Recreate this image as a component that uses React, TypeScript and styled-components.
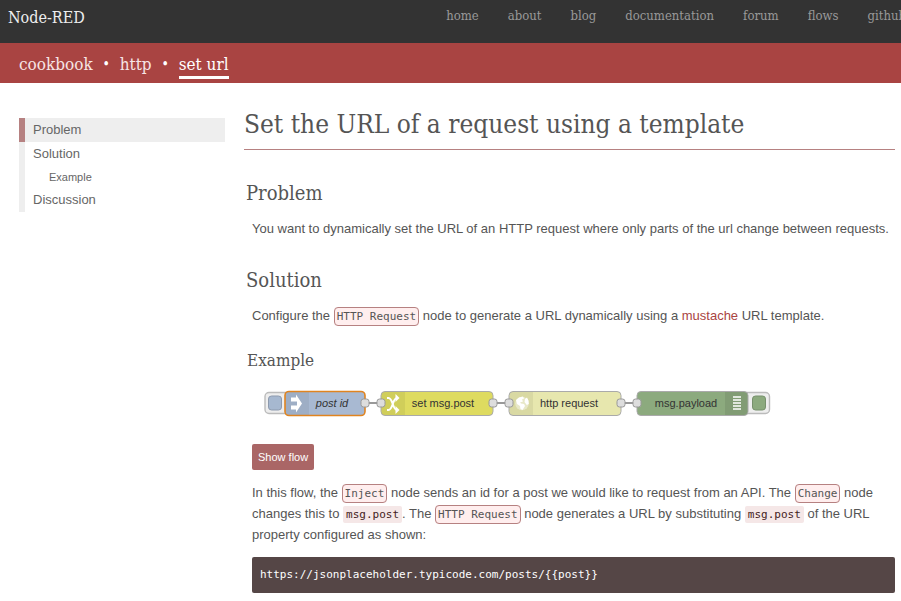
import React from "react";
import styled, { createGlobalStyle, css } from "styled-components";

const slab = `"Roboto Slab", "DejaVu Serif Condensed", "DejaVu Serif", serif`;
const sans = `"Liberation Sans", Arial, sans-serif`;
const mono = `"DejaVu Sans Mono", "Liberation Mono", monospace`;

const GlobalStyle = createGlobalStyle`
  * { box-sizing: border-box; }
  body {
    margin: 0;
    overflow-x: hidden;
    background: #fff;
    color: #555;
    font: 13px/21px ${sans};
  }
  a { color: inherit; text-decoration: none; }
`;

const Header = styled.header`
  display: flex;
  justify-content: space-between;
  height: 43px;
  padding-left: 8px;
  overflow: hidden;
  background: #333;
  font-family: ${slab};
  white-space: nowrap;
`;

const Brand = styled.a`
  color: #eee;
  font-size: 16px;
  line-height: 35px;
`;

const SiteNav = styled.nav`
  display: flex;
  gap: 29px;
  margin-right: -5px;
  color: #999;
  font-size: 13px;
  line-height: 32px;
`;

const Crumbs = styled.nav`
  display: flex;
  align-items: center;
  height: 40px;
  padding: 2px 19px 0;
  background: #a94442;
  color: #fff;
  font: 17px/24px ${slab};
`;

const Crumb = styled.a<{ $current?: boolean }>`
  height: 29px;
  line-height: 28px;
  color: ${(p) => (p.$current ? "#fff" : "#f7e5e5")};
  border-bottom: 3px solid ${(p) => (p.$current ? "#fff" : "transparent")};
`;

const Dot = styled.span`
  width: 27px;
  font-size: 14px;
  text-align: center;
`;

const Page = styled.div`
  display: grid;
  grid-template-columns: 206px minmax(0, 1fr);
  gap: 19px;
  padding: 23px 6px 8px 19px;
`;

const Contents = styled.nav`
  align-self: start;
  margin-top: 12px;
`;

const ContentsLink = styled.a<{ $active?: boolean; $nested?: boolean }>`
  display: block;
  padding-left: 8px;
  border-left: 6px solid #eee;
  color: #666;
  font-size: 13px;
  line-height: 24px;
  ${(p) => p.$nested && css`
    padding-left: 24px;
    font-size: 11px;
    line-height: 22px;
  `}
  ${(p) => p.$active && css`
    border-color: #b68181;
    background: #eee;
  `}
`;

const Title = styled.h1`
  margin: 0 0 28px;
  padding-bottom: 6px;
  border-bottom: 1px solid #b68181;
  font: 26px/37px ${slab};
`;

const Section = styled.h2`
  margin: 26px 2px 10px;
  font: 20px/30px ${slab};
`;

const Subsection = styled.h3`
  margin: 22px 3px 18px;
  font: 17px/24px ${slab};
`;

const Text = styled.p`
  margin: 0 0 0 8px;
`;

const TextLink = styled.a`
  && { color: #a94442; }
`;

const NodeName = styled.code`
  padding: 2px;
  border: 1px solid #b68181;
  border-radius: 4px;
  background: #fee;
  font: 11px/14px ${mono};
`;

const Code = styled.code`
  padding: 2px 3px;
  border-radius: 2px;
  background: #f5e7e7;
  color: #422;
  font: 11px/14px ${mono};
`;

const Flow = styled.svg`
  display: block;
  margin: 0 0 27px 20px;
`;

const ShowButton = styled.button`
  display: block;
  height: 26px;
  margin: 0 0 12px 8px;
  padding: 0 6px;
  border: 0;
  border-radius: 2px;
  background: #a66;
  color: #fff;
  font: 11px/26px ${sans};
`;

const CodeBlock = styled.pre`
  margin: 12px 0 0 8px;
  padding: 8px;
  overflow: hidden;
  border-radius: 2px;
  background: #554646;
  color: #fff;
  font: 11px/20px ${mono};
`;

const siteLinks = ["home", "about", "blog", "documentation", "forum", "flows", "github"];

function Port({ x }: { x: number }) {
  return <rect x={x} y="9" width="8" height="8" rx="2.5" fill="#ddd" stroke="#999" />;
}

function FlowDiagram() {
  return (
    <Flow width="507" height="27" viewBox="0 0 507 27" role="img" aria-label="Flow of four connected nodes">
      <path d="M101 13h16M229 13h16M357 13h16" stroke="#999" strokeWidth="2" />
      <rect x="1" y="2.5" width="32" height="21" rx="4" fill="#eee" stroke="#bbb" strokeWidth="1.4" />
      <rect x="4.5" y="6" width="13" height="14" rx="3" fill="#a6b8d0" stroke="#8d9aae" />
      <rect x="473" y="2.5" width="32.5" height="21" rx="4" fill="#eee" stroke="#bbb" strokeWidth="1.4" />
      <rect x="488.5" y="6" width="13" height="14" rx="3" fill="#8caa7e" stroke="#77906c" />

      <rect x="21" y="1.5" width="80" height="24" rx="4" fill="#a8b9d2" />
      <path d="M45 1.5H25q-4 0-4 4v16q0 4 4 4h20z" fill="#000" opacity=".06" />
      <rect x="21" y="1.5" width="80" height="24" rx="4" fill="none" stroke="#e08420" strokeWidth="1.6" />
      <path d="M27 7.5h5V4.5l6 9-6 9v-3h-5v-4h6v-4h-6z" fill="#fff" />

      <rect x="117" y="1.5" width="112" height="24" rx="4" fill="#dedb60" stroke="#aaa" />
      <path d="M141 2h-20q-3.5 0-3.5 4v15q0 4 3.5 4h20z" fill="#000" opacity=".06" />
      <path d="M123 8h1.5c4.5 0 4 12 8.5 12M123 20h1.5c4.5 0 4-12 8.5-12" fill="none" stroke="#fff" strokeWidth="2" />
      <path d="M131.5 4l4 4-4 4zM131.5 16l4 4-4 4z" fill="#fff" />

      <rect x="245" y="1.5" width="112" height="24" rx="4" fill="#e7e7ae" stroke="#aaa" />
      <path d="M269 2h-20q-3.5 0-3.5 4v15q0 4 3.5 4h20z" fill="#000" opacity=".06" />
      <circle cx="258" cy="13.5" r="6.8" fill="#fff" opacity=".4" />
      <path d="M252 10l3-2.5 4-1 1 2-2 1 1 2-3 1 1 1 3 .5 1 2-2.5 4-2-1-.5-3-3-2zM261 9l2-1.5 1.5 3 .3 3.5-2 1-2.3-3z" fill="#fff" />

      <rect x="373" y="1.5" width="111" height="24" rx="4" fill="#8caa7e" stroke="#aaa" />
      <path d="M461 2h19q3.5 0 3.5 4v15q0 4-3.5 4h-19z" fill="#000" opacity=".08" />
      <path d="M469 7h8M469 10h8M469 13h8M469 16h8M469 19h8" stroke="#fff" strokeWidth="1.5" />

      <Port x={97} /><Port x={113} /><Port x={225} /><Port x={241} /><Port x={353} /><Port x={369} />
      <g fill="#333" fontFamily="Liberation Sans, Arial, sans-serif" fontSize="11" textAnchor="middle">
        <text x="68" y="17" fontStyle="italic">post id</text>
        <text x="179" y="17">set msg.post</text>
        <text x="305" y="17">http request</text>
        <text x="422" y="17">msg.payload</text>
      </g>
    </Flow>
  );
}

export default function App() {
  return (
    <>
      <GlobalStyle />
      <Header>
        <Brand href="#">Node-RED</Brand>
        <SiteNav>{siteLinks.map((label) => <a href="#" key={label}>{label}</a>)}</SiteNav>
      </Header>
      <Crumbs aria-label="Breadcrumb">
        <Crumb href="#">cookbook</Crumb>
        <Dot>•</Dot>
        <Crumb href="#">http</Crumb>
        <Dot>•</Dot>
        <Crumb href="#" $current>set url</Crumb>
      </Crumbs>
      <Page>
        <Contents aria-label="Contents">
          <ContentsLink href="#problem" $active>Problem</ContentsLink>
          <ContentsLink href="#solution">Solution</ContentsLink>
          <ContentsLink href="#example" $nested>Example</ContentsLink>
          <ContentsLink href="#discussion">Discussion</ContentsLink>
        </Contents>
        <main>
          <Title>Set the URL of a request using a template</Title>
          <Section id="problem">Problem</Section>
          <Text>You want to dynamically set the URL of an HTTP request where only parts of the url change between requests.</Text>
          <Section id="solution">Solution</Section>
          <Text>
            Configure the <NodeName>HTTP Request</NodeName> node to generate a URL dynamically using a{" "}
            <TextLink href="#">mustache</TextLink> URL template.
          </Text>
          <Subsection id="example">Example</Subsection>
          <FlowDiagram />
          <ShowButton type="button">Show flow</ShowButton>
          <Text>
            In this flow, the <NodeName>Inject</NodeName> node sends an id for a post we would like to request from an API.
            The <NodeName>Change</NodeName> node changes this to <Code>msg.post</Code>. The{" "}
            <NodeName>HTTP Request</NodeName> node generates a URL by substituting <Code>msg.post</Code> of the URL
            property configured as shown:
          </Text>
          <CodeBlock><code>{"https://jsonplaceholder.typicode.com/posts/{{post}}"}</code></CodeBlock>
        </main>
      </Page>
    </>
  );
}
